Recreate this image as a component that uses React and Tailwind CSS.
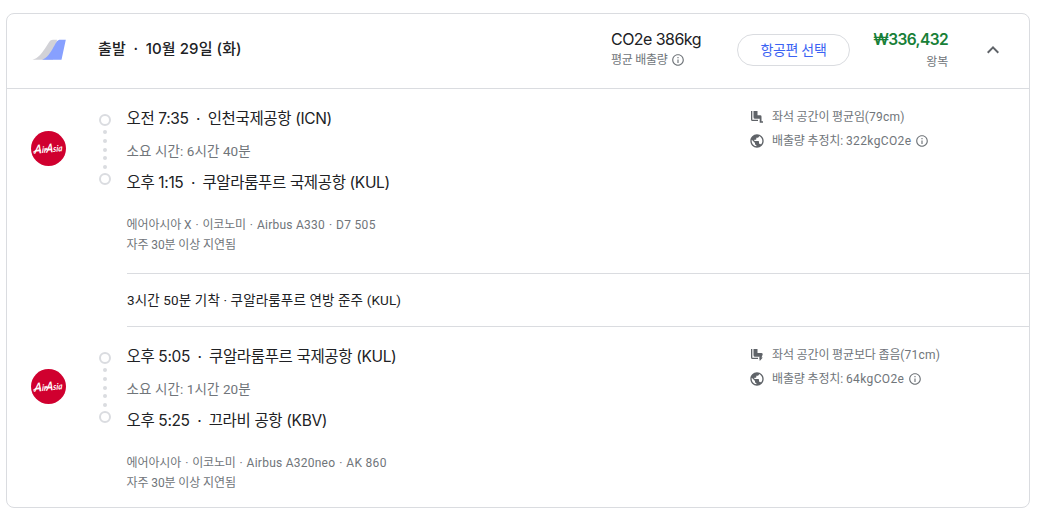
import React from 'react';
import { MdExpandLess, MdOutlineInfo, MdPublic } from 'react-icons/md';

const legs = [
  {
    departTime: '오전 7:35',
    departAirport: '인천국제공항 (ICN)',
    duration: '소요 시간: 6시간 40분',
    arriveTime: '오후 1:15',
    arriveAirport: '쿠알라룸푸르 국제공항 (KUL)',
    airline: '에어아시아 X',
    aircraft: 'Airbus A330',
    flight: 'D7 505',
    legroom: '좌석 공간이 평균임',
    pitch: '(79cm)',
    tight: false,
    emissions: '322kgCO2e',
  },
  {
    departTime: '오후 5:05',
    departAirport: '쿠알라룸푸르 국제공항 (KUL)',
    duration: '소요 시간: 1시간 20분',
    arriveTime: '오후 5:25',
    arriveAirport: '끄라비 공항 (KBV)',
    airline: '에어아시아',
    aircraft: 'Airbus A320neo',
    flight: 'AK 860',
    legroom: '좌석 공간이 평균보다 좁음',
    pitch: '(71cm)',
    tight: true,
    emissions: '64kgCO2e',
  },
];

const TailsLogo = () => (
  <svg width="35" height="22" viewBox="0 0 35 22" className="shrink-0">
    <path d="M.5 20.700C6 19.500 9 15 13 9.500C17 3.500 17.500 .7 21 .7H25L21 20.700Z" fill="#d2d2d7" />
    <path d="M10 20.700C15 19 18 14.500 21.300 8.500C24.500 3 25 .7 28.500 .7H33.800L29.500 20.700Z" fill="#87a0ff" />
  </svg>
);

const AirAsiaLogo = () => (
  <svg width="35" height="35" viewBox="0 0 35 35" className="shrink-0">
    <circle cx="17.500" cy="17.500" r="17.500" fill="#d0002f" />
    <g transform="rotate(-5 17 18) skewX(-8)" fill="#fff" fontFamily="Lato, sans-serif" fontStyle="italic" fontWeight="700">
      <text x="6" y="21.500" fontSize="9" textLength="12.500" lengthAdjust="spacingAndGlyphs">
        <tspan fontSize="12">A</tspan>ir
      </text>
      <text x="18" y="21.500" fontSize="9" textLength="16" lengthAdjust="spacingAndGlyphs">
        <tspan fontSize="12">A</tspan>sia
      </text>
      <path d="M5 19.800Q7.500 17.500 12 18.600M17 19Q19 17.600 23 18.600" fill="none" stroke="#fff" strokeWidth="1" strokeLinecap="round" />
    </g>
  </svg>
);

const SeatIcon = ({ tight }) => (
  <svg width="14" height="14" viewBox="0 0 14 14" fill="#5f6368" className="shrink-0">
    <path d="M1 1H2.300V9.700H8V11H2.500Q1 11 1 9.500Z" />
    {tight ? (
      <path d="M3.500 1H7.500V5H11.500Q13 5 12.700 6.500L11.500 9.500H12.800L9.800 13L9.200 9.800L9.700 8.700H5Q3.500 8.700 3.500 7.200Z" />
    ) : (
      <path d="M3.500 1H7.500V5.200H10.200Q11.500 5.200 11.500 6.500V11.200H13V12.800H9.700V8.700H5Q3.500 8.700 3.500 7.200Z" />
    )}
  </svg>
);

const Timeline = () => (
  <div className="flex w-3 flex-col items-center">
    <div className="h-3 w-3 rounded-full border-2 border-[#dadce0]"></div>
    <div className="flex h-[47px] flex-col items-center justify-between py-1">
      {[0, 1, 2, 3, 4].map((dot) => (
        <div key={dot} className="h-1 w-1 rounded-full bg-[#dadce0]"></div>
      ))}
    </div>
    <div className="h-3 w-3 rounded-full border-2 border-[#dadce0]"></div>
  </div>
);

const Stop = ({ time, airport }) => (
  <div className="flex h-6 items-center whitespace-pre font-['Inter','Noto_Sans_CJK_KR',sans-serif] text-[15.500px] leading-6 tracking-[-0.350px] text-[#202124]">
    <span>{time}</span>
    <span className="w-[19px] text-center">·</span>
    <span>{airport}</span>
  </div>
);

const Dot = () => <span className="w-[11px] text-center">·</span>;

const Leg = ({ leg }) => (
  <div className="flex h-[184px] pl-6">
    <div className="w-[68px] pt-[42px]">
      <AirAsiaLogo />
    </div>
    <div className="w-[27.500px] pt-[25px]">
      <Timeline />
    </div>
    <div className="w-[623.500px] pt-[18px]">
      <Stop time={leg.departTime} airport={leg.departAirport} />
      <div className="mt-[10px] h-5 text-[13.500px] leading-5 tracking-[0.090px] text-[#70757a]">{leg.duration}</div>
      <div className="mt-[10px]">
        <Stop time={leg.arriveTime} airport={leg.arriveAirport} />
      </div>
      <div className="mt-5 text-xs leading-5 tracking-[-0.100px] text-[#70757a]">
        <div className="flex">
          <span>{leg.airline}</span>
          <Dot />
          <span className="tracking-[-0.200px]">이코노미</span>
          <Dot />
          <span className="tracking-[0.250px]">{leg.aircraft}</span>
          <Dot />
          <span className="tracking-[0.300px]">{leg.flight}</span>
        </div>
        <div>자주 30분 이상 지연됨</div>
      </div>
    </div>
    <div className="pt-4 text-xs tracking-[-0.150px] text-[#70757a]">
      <div className="flex h-6 items-center">
        <SeatIcon tight={leg.tight} />
        <span className="ml-2">{leg.legroom}</span>
        <span className="tracking-[0.200px]">{leg.pitch}</span>
      </div>
      <div className="flex h-6 items-center">
        <MdPublic size={16} className="-ml-px mr-[7px] text-[#5f6368]" />
        <span>배출량 추정치:</span>
        <span className="ml-[3px] tracking-[0.380px]">{leg.emissions}</span>
        <MdOutlineInfo size={14} className="ml-1" />
      </div>
    </div>
  </div>
);

const App = () => {
  return (
    <div className="h-[513px] w-[1038px] overflow-hidden bg-white pl-[6px] pt-[13px] font-['Roboto','Noto_Sans_CJK_KR',sans-serif]">
      <div className="h-[495px] w-[1024px] rounded-lg border border-[#dadce0]">
        <div className="flex h-[75px] border-b border-[#dadce0] pl-[25px]">
          <div className="w-[66px] pt-[25px]">
            <TailsLogo />
          </div>
          <div className="flex w-[513px] whitespace-pre pt-[23px] font-['Inter','Noto_Sans_CJK_KR',sans-serif] text-[15px] font-medium leading-6 tracking-[0.080px] text-[#202124]">
            <span>출발</span>
            <span className="w-5 text-center">·</span>
            <span>10월 29일 (화)</span>
          </div>
          <div className="w-[126px] pt-[13px]">
            <div className="whitespace-nowrap font-['Inter',sans-serif] text-base leading-6 tracking-[-0.550px] text-[#202124]">CO2e 386kg</div>
            <div className="mt-px flex h-4 items-center text-xs tracking-[-0.300px] text-[#70757a]">
              <span>평균 배출량</span>
              <MdOutlineInfo size={14} className="ml-1" />
            </div>
          </div>
          <div className="pt-5">
            <button className="h-8 w-[113px] rounded-full border border-[#dadce0] text-sm tracking-[-0.300px] text-[#3b63f3]">
              항공편 선택
            </button>
          </div>
          <div className="w-[98px] pt-[14px] text-right">
            <div className="font-['Inter','Noto_Sans_CJK_KR',sans-serif] text-[15.500px] font-semibold leading-6 tracking-[-0.600px] text-[#188038]">₩336,432</div>
            <div className="text-xs leading-5 tracking-[-0.200px] text-[#70757a]">왕복</div>
          </div>
          <div className="ml-[33px] pt-6">
            <MdExpandLess size={24} className="text-[#5f6368]" />
          </div>
        </div>

        <Leg leg={legs[0]} />
        <div className="ml-[120px] flex h-[54px] items-center border-y border-[#dadce0] text-[13.500px] tracking-[0.140px] text-[#202124]">
          3시간 50분 기착 · 쿠알라룸푸르 연방 준주 (KUL)
        </div>
        <Leg leg={legs[1]} />
      </div>
    </div>
  );
};

export default App;
